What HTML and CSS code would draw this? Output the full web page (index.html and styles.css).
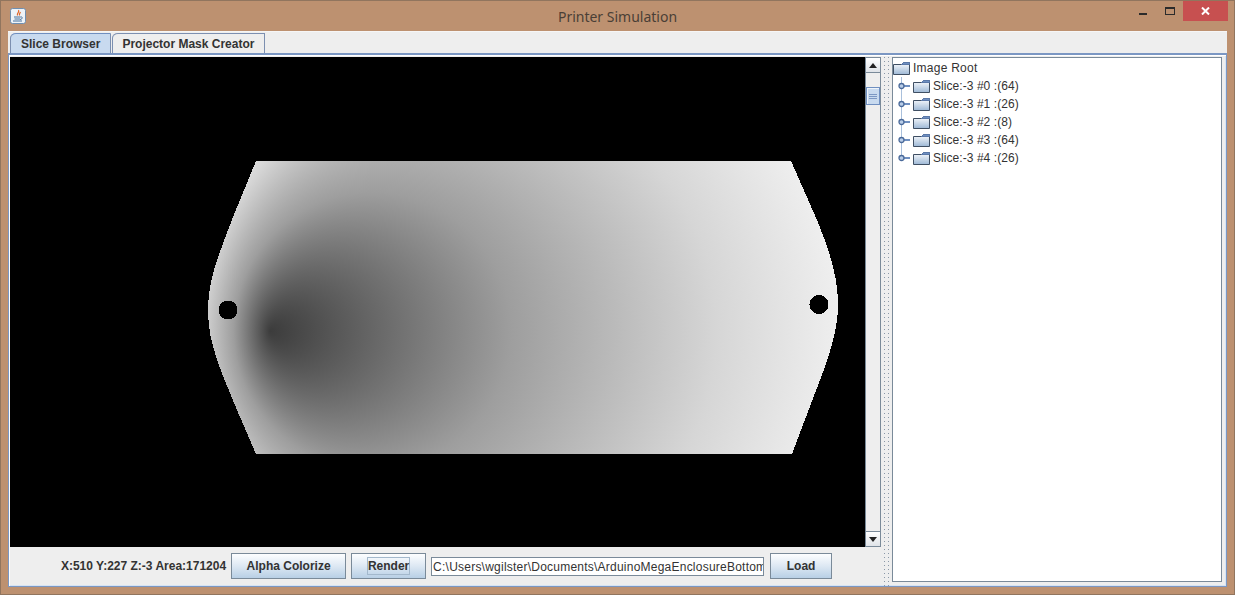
FILE: index.html
```html
<!doctype html>
<html lang="en">

<head>
    <meta charset="UTF-8">
    <title>Printer Simulation</title>
    <link rel="stylesheet" href="styles.css">
</head>

<body>
    <div class="window">
        <div class="titlebar">
            <svg class="app-icon" width="16" height="16" viewBox="0 0 16 16">
                <rect x="0.5" y="0.5" width="15" height="15" rx="2" fill="#eef3f8" stroke="#6f8fb0" />
                <path d="M8.5 2 C10 4 6.5 5 7.5 7.5 M10.5 4 C9.5 5.5 9 6 9.5 7.5" fill="none" stroke="#e0672a" stroke-width="1.2" />
                <path d="M4 9 H10.5 M4.5 11 H10 M3 13 H12 M10.5 9 C13 8.5 13 11 10 11.5" fill="none" stroke="#47719c" />
            </svg>
            <div class="title">Printer Simulation</div>
            <div class="controls">
                <div class="btn-min"><span></span></div>
                <div class="btn-max"><span></span></div>
                <div class="btn-close">
                    <svg width="9" height="8" viewBox="0 0 9 8">
                        <path d="M1 0.5 L8 7.5 M8 0.5 L1 7.5" stroke="#fff" stroke-width="2" />
                    </svg>
                </div>
            </div>
        </div>

        <div class="client">
            <div class="tabs">
                <div class="tab active">Slice Browser</div>
                <div class="tab">Projector Mask Creator</div>
            </div>
            <div class="pane">
                <div class="left">
                    <div class="viewer">
                        <div class="canvas">
                            <svg width="855" height="490" viewBox="10 57 855 490" shape-rendering="crispEdges">
                                <defs>
                                    <radialGradient id="depth" gradientUnits="userSpaceOnUse" cx="526" cy="331" r="347" fx="270" fy="331">
                                        <stop offset="0" stop-color="#3c3c3c" />
                                        <stop offset="0.1" stop-color="#555" />
                                        <stop offset="0.4" stop-color="#9e9e9e" />
                                        <stop offset="0.74" stop-color="#d6d6d6" />
                                        <stop offset="0.94" stop-color="#eeeeee" />
                                        <stop offset="1" stop-color="#f2f2f2" />
                                    </radialGradient>
                                    <linearGradient id="folder" x1="0" y1="0" x2="0" y2="1">
                                        <stop offset="0" stop-color="#fff" />
                                        <stop offset="1" stop-color="#9db8d6" />
                                    </linearGradient>
                                </defs>
                                <path fill="url(#depth)" d="M256 161 H791 L817 220 C828 247 838 275 838 304 C838 332 828 360 815 393 L792 454 H256 L237 410 C222 373 208 345 208 310 C208 280 218 257 233 217 Z" />
                                <circle cx="228" cy="310" r="9.5" fill="#000" />
                                <circle cx="819" cy="304.5" r="9.5" fill="#000" />
                            </svg>
                        </div>
                        <div class="scrollbar">
                            <div class="arrow"><i class="up"></i></div>
                            <div class="track">
                                <div class="thumb"><b></b><b></b><b></b></div>
                            </div>
                            <div class="arrow"><i class="down"></i></div>
                        </div>
                    </div>
                    <div class="toolbar">
                        <span class="status">X:510 Y:227 Z:-3 Area:171204</span>
                        <div class="button wide">Alpha Colorize</div>
                        <div class="button mid"><span class="focus">Render</span></div>
                        <div class="field">C:\Users\wgilster\Documents\ArduinoMegaEnclosureBottom</div>
                        <div class="button small">Load</div>
                    </div>
                </div>
                <div class="divider"></div>
                <div class="tree">
                    <div class="row root">
                        <svg class="folder" width="17" height="14" viewBox="0 0 17 14"><use href="#folder-icon" /></svg>
                        <span>Image Root</span>
                    </div>
                    <div class="row">
                        <svg class="handle" width="15" height="18" viewBox="0 0 15 18"><use href="#handle-icon" /></svg>
                        <svg class="folder" width="17" height="14" viewBox="0 0 17 14"><use href="#folder-icon" /></svg>
                        <span>Slice:-3 #0 :(64)</span>
                    </div>
                    <div class="row">
                        <svg class="handle" width="15" height="18" viewBox="0 0 15 18"><use href="#handle-icon" /></svg>
                        <svg class="folder" width="17" height="14" viewBox="0 0 17 14"><use href="#folder-icon" /></svg>
                        <span>Slice:-3 #1 :(26)</span>
                    </div>
                    <div class="row">
                        <svg class="handle" width="15" height="18" viewBox="0 0 15 18"><use href="#handle-icon" /></svg>
                        <svg class="folder" width="17" height="14" viewBox="0 0 17 14"><use href="#folder-icon" /></svg>
                        <span>Slice:-3 #2 :(8)</span>
                    </div>
                    <div class="row">
                        <svg class="handle" width="15" height="18" viewBox="0 0 15 18"><use href="#handle-icon" /></svg>
                        <svg class="folder" width="17" height="14" viewBox="0 0 17 14"><use href="#folder-icon" /></svg>
                        <span>Slice:-3 #3 :(64)</span>
                    </div>
                    <div class="row">
                        <svg class="handle" width="15" height="18" viewBox="0 0 15 18"><use href="#handle-last" /></svg>
                        <svg class="folder" width="17" height="14" viewBox="0 0 17 14"><use href="#folder-icon" /></svg>
                        <span>Slice:-3 #4 :(26)</span>
                    </div>
                </div>
            </div>
        </div>
    </div>

    <svg class="sprites" width="0" height="0">
        <symbol id="folder-icon" viewBox="0 0 17 14">
            <path d="M0.5 3.5 H8.5 L10.5 1.5 H16.5 V13.5 H0.5 Z" fill="url(#folder)" stroke="#3f4f63" />
            <path d="M10.5 1.5 H16.5 V3.5 H8.5 Z" fill="#6f8fc0" stroke="#5a78a8" />
        </symbol>
        <symbol id="handle-icon" viewBox="0 0 15 18">
            <path d="M3.5 0 V18" stroke="#a9c0dc" fill="none" />
            <path d="M6 9 H12" stroke="#6f8fc0" stroke-width="2" fill="none" />
            <circle cx="3.5" cy="9" r="2.5" fill="#b9cde8" stroke="#4a6a9a" stroke-width="1.3" />
        </symbol>
        <symbol id="handle-last" viewBox="0 0 15 18">
            <path d="M3.5 0 V8" stroke="#a9c0dc" fill="none" />
            <path d="M6 9 H12" stroke="#6f8fc0" stroke-width="2" fill="none" />
            <circle cx="3.5" cy="9" r="2.5" fill="#b9cde8" stroke="#4a6a9a" stroke-width="1.3" />
        </symbol>
    </svg>
</body>

</html>
```

FILE: styles.css
```css
* {
    margin: 0;
    padding: 0;
    box-sizing: border-box;
}

html,
body {
    height: 100%;
    overflow: hidden;
}

body {
    font-family: "Liberation Sans", Arial, sans-serif;
    font-size: 12px;
    color: #333;
}

.sprites {
    display: block;
    height: 0;
}

.window {
    display: flex;
    flex-direction: column;
    width: 1235px;
    height: 595px;
    padding: 0 7px 7px;
    background: #bd9170;
    border: 1px solid #91755e;
}

/* title bar */
.titlebar {
    display: flex;
    height: 30px;
    flex: none;
}

.app-icon {
    margin: 7px 0 0 2px;
    flex: none;
}

.title {
    flex: 1;
    padding-top: 6px;
    padding-left: 78px;
    text-align: center;
    font-family: "Noto Sans", sans-serif;
    font-size: 14px;
    color: #4a3f36;
}

.controls {
    display: flex;
    align-items: flex-start;
    margin-right: -1px;
}

.btn-min {
    width: 26px;
    height: 19px;
    padding: 12px 0 0 8px;
}

.btn-min span {
    display: block;
    width: 8px;
    height: 2px;
    background: #2b2b2b;
}

.btn-max {
    width: 26px;
    height: 19px;
    padding: 6px 0 0 8px;
}

.btn-max span {
    display: block;
    width: 10px;
    height: 8px;
    border: 1px solid #2b2b2b;
    border-top-width: 2px;
}

.btn-close {
    display: flex;
    align-items: center;
    justify-content: center;
    width: 45px;
    height: 20px;
    background: #c75050;
}

/* client area */
.client {
    display: flex;
    flex-direction: column;
    flex: 1;
    min-height: 0;
    background: #eee;
    border-top: 1px solid #f6f6f6;
}

.tabs {
    display: flex;
    flex: none;
    height: 21px;
    padding: 1px 0 0 2px;
}

.tab {
    height: 20px;
    padding: 3px 10px 0 9px;
    margin-right: 1px;
    font-weight: bold;
    background: #eee;
    border: 1px solid #7c8fb0;
    border-bottom: 0;
    border-top-left-radius: 6px 5px;
}

.tab.active {
    padding-left: 10px;
    padding-right: 10px;
    background: #c8daef;
    border-top-color: #6f8fc0;
}

.pane {
    display: flex;
    flex: 1;
    min-height: 0;
    padding: 1px 1px 0;
    border: 1px solid #7b97c3;
    border-top-width: 2px;
    background: #eee;
    box-shadow: inset 1px 1px 0 #fff, inset -1px -1px 0 #d6e4f4;
}

.left {
    display: flex;
    flex-direction: column;
    width: 871px;
    flex: none;
    margin-top: 1px;
}

.viewer {
    display: flex;
    height: 490px;
    flex: none;
}

.canvas {
    width: 855px;
    background: #000;
}

.canvas svg {
    display: block;
}

/* scroll bar */
.scrollbar {
    display: flex;
    flex-direction: column;
    width: 16px;
    background: #eee;
    border-left: 1px solid #7a8a99;
    border-right: 1px solid #7a8a99;
}

.arrow {
    display: flex;
    align-items: center;
    justify-content: center;
    height: 16px;
    flex: none;
    background: linear-gradient(#fff, #dfe3e8);
    border-top: 1px solid #7a8a99;
    border-bottom: 1px solid #7a8a99;
}

.arrow i {
    width: 0;
    height: 0;
    border-left: 4px solid transparent;
    border-right: 4px solid transparent;
}

.arrow i.up {
    border-bottom: 5px solid #222;
}

.arrow i.down {
    border-top: 5px solid #222;
}

.track {
    flex: 1;
    padding-top: 14px;
}

.thumb {
    display: flex;
    flex-direction: column;
    justify-content: center;
    gap: 1px;
    height: 18px;
    padding: 0 2px;
    background: #c8daef;
    border: 1px solid #6f8fc0;
    box-shadow: inset 1px 1px 0 #eef4fb;
}

.thumb b {
    display: block;
    height: 1px;
    background: #7b97c3;
}

/* bottom row */
.toolbar {
    display: flex;
    align-items: center;
    justify-content: center;
    gap: 5px;
    flex: 1;
    padding: 0 0 1px 2px;
}

.status {
    font-weight: bold;
}

.button {
    display: flex;
    align-items: center;
    justify-content: center;
    height: 26px;
    font-weight: bold;
    background: linear-gradient(#fdfeff, #dde8f3 50%, #b8cfe5);
    border: 1px solid #7a8a99;
}

.button.wide {
    width: 115px;
}

.button.mid {
    width: 75px;
}

.button.small {
    width: 62px;
    margin-left: 1px;
}

.focus {
    padding: 1px 0;
    border: 1px solid #a3b8cc;
}

.field {
    width: 333px;
    height: 19px;
    padding: 2px 1px 0 1px;
    overflow: hidden;
    white-space: nowrap;
    letter-spacing: 0.23px;
    background: #fff;
    border: 1px solid #7a8a99;
}

.divider {
    width: 10px;
    flex: none;
    background-image: radial-gradient(circle at 0.5px 0.5px, #8a98a8 0.7px, transparent 0.8px);
    background-size: 4px 4px;
    background-position: 3px 1px;
    background-clip: content-box;
    padding: 0 2px;
}

/* tree */
.tree {
    flex: 1;
    margin: 1px 3px 4px 1px;
    padding: 1px 0 0 0;
    background: #fff;
    border: 1px solid #7a8a99;
}

.row {
    display: flex;
    align-items: center;
    height: 18px;
    padding-left: 5px;
    letter-spacing: 0.06px;
    white-space: nowrap;
}

.row.root {
    padding-left: 0;
    letter-spacing: 0.25px;
}

.row .handle {
    flex: none;
}

.row .folder {
    flex: none;
    margin-right: 3px;
}
```
